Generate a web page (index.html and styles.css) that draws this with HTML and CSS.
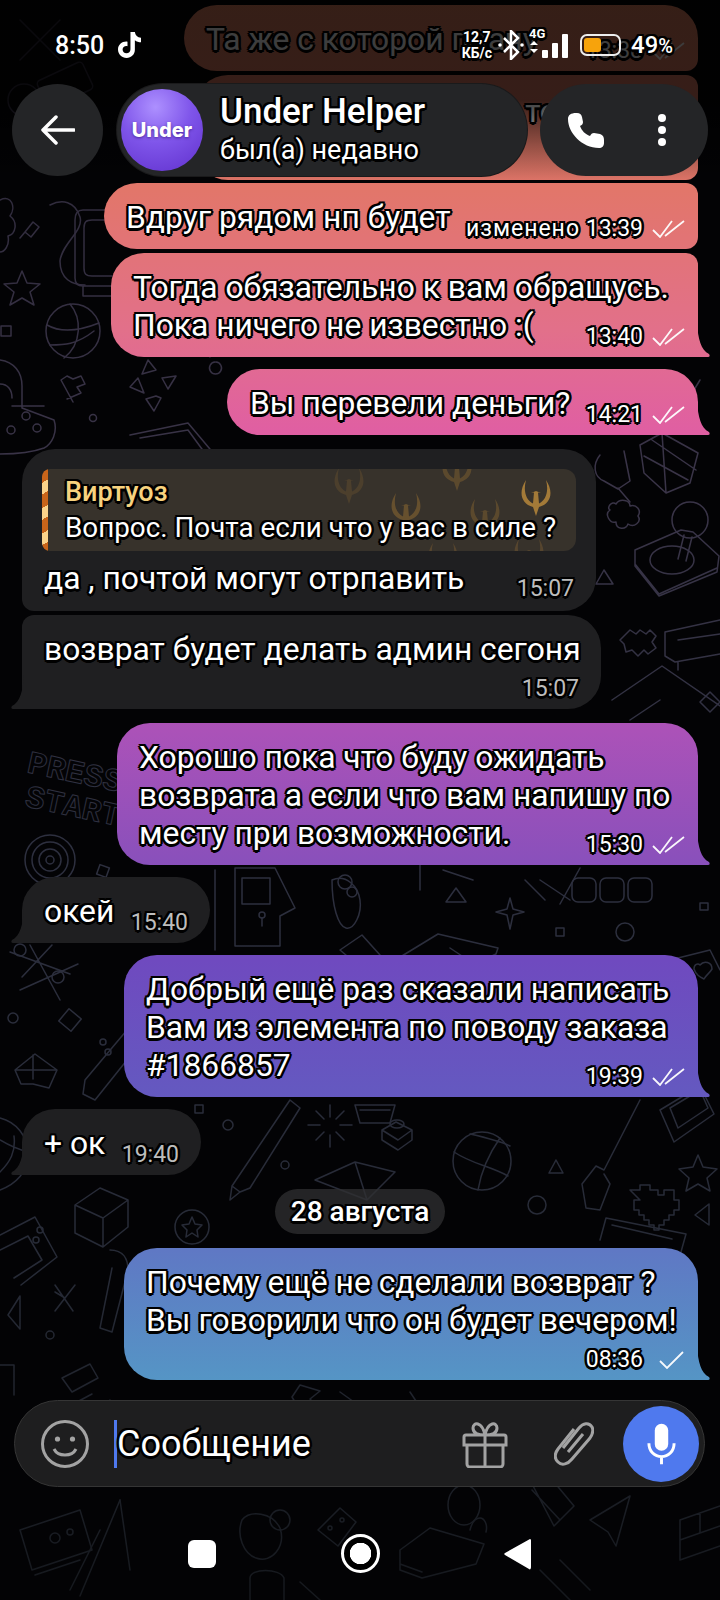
FILE: index.html
```html
<!DOCTYPE html>
<html lang="ru">
<head>
    <meta charset="UTF-8">
    <meta name="viewport" content="width=device-width, initial-scale=1.0">
    <title>Under Helper</title>
    <link rel="stylesheet" href="styles.css">
</head>
<body>
<div class="page">
    <!-- обои с дудлами -->
    <svg class="doodles" viewBox="0 0 720 1600" aria-hidden="true">
        <defs>
            <linearGradient id="doodle-ink" gradientUnits="userSpaceOnUse" x1="0" y1="0" x2="0" y2="1600">
                <stop offset="0" stop-color="#2a2636"/>
                <stop offset="0.3" stop-color="#3a3448"/>
                <stop offset="0.5" stop-color="#2e3040"/>
                <stop offset="0.8" stop-color="#262a36"/>
                <stop offset="1" stop-color="#15181d"/>
            </linearGradient>
        </defs>
        <g fill="none" stroke="url(#doodle-ink)" stroke-width="1.5" stroke-linejoin="round" stroke-linecap="round">
            <!-- верх -->
            <path d="M20 20l40 40M60 20l-40 40"/>
            <rect x="40" y="70" width="50" height="30" rx="4" transform="rotate(-25 65 85)"/>
            <circle cx="24" cy="100" r="16"/>
            <path d="M0 200c12-6 16 8 10 16 8 6 6 18-2 20 2 10-4 16-8 16"/>
            <path d="M25 232l8-10 6 5-8 10zM25 232l-5 6M50 205c12-6 25-4 30 12 4 14-18 26-20 44 0 18 12 24 25 24"/>
            <path d="M75 220c0-6 2-10 8-10h30M75 220v58c0 6 4 8 8 8h30M84 228c0-6 2-8 8-8h20M84 228v40c0 6 2 8 8 8h20M83 286v10h30"/>
            <path d="M22 271l5 12 13 1-10 8 4 13-12-7-12 7 4-13-10-8 13-1z"/>
            <circle cx="73" cy="331" r="27"/>
            <path d="M70 304c12 14 12 40-6 54M47 325c14 8 32 6 52-2M50 345c14 0 26 0 44-14"/>
            <rect x="1" y="326" width="10" height="10"/>
            <path d="M0 360c14 2 22 12 22 26v22l32 12c4 12-2 24-10 28-16 6-34 6-44 6M0 384c8 0 12 6 12 14M12 406l32 0"/>
            <circle cx="26" cy="416" r="4"/><circle cx="11" cy="430" r="4"/><circle cx="37" cy="428" r="4"/>
            <path d="M73 402l-12-22 6-4 6 3 8-3 4 8-8 3 4 6-14 6"/>
            <circle cx="93" cy="418" r="3.5"/>
            <path d="M148 360l8 10-14 4zM162 378l14-2-8 13zM138 378l-8 9 14 6zM156 396l-10 3 8 12 7-13z"/>
            <path d="M130 435l58-12 32 38M140 438l48-8 22 30"/>
            <path d="M200 345l10 12M215 362a6 6 0 1 0 1 0"/>
            <!-- право: y 450-720 -->
            <path d="M640 445l22-12 36 20-8 30-24 10-22-20z M662 433l4 60M644 456l44 24M652 440l44 30"/>
            <path d="M600 455c-8 10-6 22 4 26l14 8 12-8-6-30M618 488l12 14"/>
            <circle cx="690" cy="520" r="18"/><path d="M684 535l-6 24M692 537l-6 24"/>
            <path d="M635 550l46-20 12 2 26 24-2 16-58 24-24-30zM635 550v14l24 30 58-26"/>
            <ellipse cx="672" cy="560" rx="22" ry="14"/>
            <path d="M604 570l-8 14h17z"/>
            <path d="M616 504c4-6 14-4 14 2 6-2 12 4 8 10 4 6-4 12-10 8-2 6-12 6-12-2-6 2-12-8-6-12-4-2 2-10 6-6z"/>
            <path d="M630 630l6 4 4-4 6 4 4-4 6 6-4 6 4 6-8 6-4-4-6 6-6-6-6 2-2-8-4-4 6-6z"/>
            <path d="M665 632l55-12M665 632v24l10 6 45-8M678 640l42-6M678 662v8"/>
            <path d="M612 700l50-34 58 40M630 720l30-20"/>
            <path d="M700 702l10-10 10 10-10 10z"/>
            <path d="M598 380l24 32M640 390l40 8M700 380l-18 30"/>
            <!-- слева: PRESS START и мишень -->
            <text x="26" y="772" class="doodle-label" transform="rotate(12 26 772)">PRESS</text>
            <text x="24" y="806" class="doodle-label" transform="rotate(12 24 806)">START</text>
            <circle cx="50" cy="860" r="25"/><circle cx="50" cy="860" r="18"/><circle cx="50" cy="860" r="11"/><circle cx="50" cy="860" r="4"/>
            <rect x="98" y="866" width="10" height="10" transform="rotate(20 103 871)"/>
            <path d="M30 945l30 55M52 945l-30 32M10 952l60 22M20 990l58-26"/>
            <circle cx="20" cy="950" r="6"/><circle cx="58" cy="977" r="6"/>
            <path d="M215 870v80M235 868h40l20 40-15 8v30h-45z M242 878h28v26h-28z"/>
            <circle cx="262" cy="915" r="3"/><path d="M262 918v8"/>
            <path d="M332 880c14-6 26 6 28 20 2 14-6 30-14 28-8-2-14-22-14-48z"/>
            <circle cx="345" cy="882" r="7"/><circle cx="352" cy="892" r="5"/>
            <path d="M340 950l22-15 18 20-20 12z"/>
            <path d="M15 1070l20-16 22 16-8 18-16-4-12 0z M33 1055l0 24M16 1070l40 0"/>
            <path d="M85 1080l42-50 10 6-2 14-40 50-12-6z"/>
            <circle cx="103" cy="1042" r="3"/><circle cx="108" cy="1052" r="3"/>
            <rect x="62" y="1012" width="16" height="16" transform="rotate(40 70 1020)"/>
            <circle cx="13" cy="1018" r="5"/>
            <!-- середина -->
            <path d="M443 870l30 10M420 860v30"/>
            <path d="M580 868l-20 36M540 880l30 20M525 880l20 20"/>
            <rect x="572" y="878" width="24" height="24" rx="6"/><rect x="600" y="878" width="24" height="24" rx="6"/><rect x="628" y="878" width="24" height="24" rx="6"/>
            <path d="M456 888l-10 14h20z"/>
            <path d="M510 898l3 11 11 3-11 3-3 14-3-14-11-3 11-3z"/>
            <path d="M392 962l46-28 60 14-2 6-58 28zM450 948l18 12"/>
            <rect x="556" y="928" width="8" height="8"/>
            <circle cx="625" cy="932" r="9"/>
            <rect x="700" y="903" width="8" height="7"/>
            <path d="M670 960l40-10 10 20M670 960l6 36M700 965c4-5 12-3 12 4-3 5-6 6-8 10-4-2-8-4-10-10 0-5 4-6 6-4z"/>
            <path d="M355 1105h40l-5 18h-30zM360 1110h30"/>
            <path d="M382 1130l14-8 16 8-14 10zM382 1130v10l16 10 14-10v-10"/>
            <ellipse cx="397" cy="1124" rx="7" ry="4"/>
            <circle cx="482" cy="1161" r="29"/>
            <path d="M454 1152c18 12 36 14 54 24M500 1138c-14 20-20 40-22 52M470 1134c18 4 32 8 40 12"/>
            <path d="M556 1160l-7 13h14z"/>
            <path d="M640 1100l-36 70M604 1170l-8-4-14 18 4 24 14 2 10-26-6-10"/>
            <path d="M698 1155l5 12 14 2-10 9 3 13-12-7-12 7 3-13-10-9 14-2z"/>
            <path d="M660 1110l40-24 14 28-40 28zM670 1108l30-18 8 18-30 20z"/>
            <path d="M630 1190h10v-5h10v5h8v5h6v-5h10v10h5v10h-5v5h-5v5h-5v5h-5v5h-5v-5h-5v-5h-5v-5h-5v-5h-5v-10h6z"/>
            <path d="M0 1118c16 4 28 18 28 36s-12 30-28 36M0 1140c10 6 20 10 28 12M0 1172c10-10 16-20 14-36"/>
            <path d="M290 1100l-58 86 8 6 10-4 50-80zM232 1186l-2 14 10-8"/>
            <rect x="195" y="1105" width="8" height="8"/>
            <circle cx="228" cy="1125" r="5"/>
            <path d="M330 1105v12M330 1135v12M308 1125h12M340 1125h12M316 1111l8 8M344 1111l-8 8M316 1140l8-8M344 1140l-8-8"/>
            <path d="M315 1180l40-18 40 10-28 28zM355 1162l12 38"/>
            <circle cx="285" cy="1165" r="4"/>
            <!-- y 1180-1380 -->
            <path d="M75 1205l25-17 28 12-25 18zM75 1205v28l28 14 25-20v-27M103 1218v29"/>
            <path d="M0 1235l35-18 22 40-36 28M0 1250l28-14 14 24-28 18"/>
            <circle cx="40" cy="1230" r="3"/><circle cx="36" cy="1240" r="3"/>
            <circle cx="192" cy="1227" r="17"/><path d="M192 1217l3 7 7 1-5 5 1 7-6-4-6 4 1-7-5-5 7-1z"/>
            <circle cx="537" cy="1205" r="9"/>
            <path d="M695 1215l14-11v21z"/>
            <path d="M600 1240l6-22 80 16-14 50M612 1225l60 14"/>
            <path d="M110 1250c14 0 18 10 18 20l-16 62-12-4 12-60"/>
            <path d="M55 1285l18 26M75 1285l-20 26M65 1298l-10-6"/>
            <path d="M20 1296l-12 19 12 14z"/>
            <circle cx="50" cy="1335" r="4"/>
            <path d="M0 1365h14v30M62 1410l30-16M62 1378l28-14 8 14-26 14z"/>
            <!-- под полем ввода -->
            <path d="M300 1385l-8 12 6 10M300 1385l20 6-10 8 6 6"/>
            <path d="M110 1400l-10 14M340 1392l14 10M410 1392l8 12"/>
            <path d="M20 1530l60-20 12 40-60 20zM35 1575l45-15"/>
            <circle cx="55" cy="1538" r="5"/><circle cx="70" cy="1532" r="3"/>
            <path d="M70 1590l30-60M120 1500l-40 96"/>
            <path d="M242 1520c8-10 30-8 38 8 6 18-8 36-24 30-12-4-20-22-14-38z"/>
            <circle cx="280" cy="1520" r="10"/>
            <path d="M318 1530l22-22 16 14-18 24z"/>
            <circle cx="330" cy="1528" r="2"/><circle cx="342" cy="1520" r="2"/>
            <path d="M400 1550l30-22 54 16-8 20-54 14-22-8zM400 1550l0 14 22 8"/>
            <path d="M470 1530c2-8 6-12 10-12s8 6 6 14"/>
            <ellipse cx="464" cy="1505" rx="16" ry="20"/>
            <path d="M530 1480l14-10 30 36-20 20zM532 1490l28 30"/>
            <path d="M590 1520l40-24-14 50-8-14z"/>
            <path d="M680 1520l40-14M680 1540l40-14M680 1560l40-14M680 1520v40M700 1513v20"/>
            <path d="M250 1600v-22c0-10 30-10 34 0v22M320 1600l-20-18M540 1570l30 30M560 1560l30 30"/>
            <path d="M120 1500l10 70"/>
        </g>
    </svg>

    <div class="messages">
        <div class="bubble out bubble-top1 joined-down">
            <p class="msg-text">Та же с которой плачу</p>
            <span class="meta">
                <span class="time">13:38</span>
                <svg class="checks" viewBox="0 0 33 18"><path d="M1 10l7 7L20 1M13 16L32 1"/></svg>
            </span>
        </div>
        <div class="bubble out bubble-top2 joined-up joined-down">
            <p class="msg-text">Просто уточню что то</p>
        </div>
        <div class="bubble out bubble-edited joined-up joined-down">
            <p class="msg-text">Вдруг рядом нп будет</p>
            <span class="meta">
                <span class="time"><span class="edited">изменено</span> 13:39</span>
                <svg class="checks" viewBox="0 0 33 18"><path d="M1 10l7 7L20 1M13 16L32 1"/></svg>
            </span>
        </div>
        <div class="bubble out tailed bubble-then joined-up">
            <p class="msg-text">Тогда обязательно к вам обращусь.<br>Пока ничего не известно :(</p>
            <span class="meta">
                <span class="time">13:40</span>
                <svg class="checks" viewBox="0 0 33 18"><path d="M1 10l7 7L20 1M13 16L32 1"/></svg>
            </span>
        </div>
        <div class="bubble out tailed bubble-money gap-md">
            <p class="msg-text">Вы перевели деньги?</p>
            <span class="meta">
                <span class="time">14:21</span>
                <svg class="checks" viewBox="0 0 33 18"><path d="M1 10l7 7L20 1M13 16L32 1"/></svg>
            </span>
        </div>

        <div class="bubble in bubble-reply gap-lg joined-down-left">
            <div class="reply">
                <svg class="reply-logos" viewBox="0 0 534 82" aria-hidden="true">
                    <defs>
                        <path id="quake" d="M7 0C-1 12 2 24 14 27l3 9 3-9C32 24 35 12 27 0c3 11 0 20-7 23.500l-1-11 3 .5-5-2-5 2 3-.5-1 11C7 20 4 11 7 0z"/>
                    </defs>
                    <use href="#quake" x="290" y="-1" fill="#6b5230" opacity=".4"/>
                    <use href="#quake" x="347" y="24" fill="#7a5c30" opacity=".7"/>
                    <use href="#quake" x="398" y="-14" fill="#7a5c30" opacity=".55"/>
                    <use href="#quake" x="426" y="30" fill="#7a5c30" opacity=".55"/>
                    <use href="#quake" x="477" y="11" fill="#a37a38"/>
                    <use href="#quake" x="384" y="74" fill="#6b5230" opacity=".6"/>
                    <use href="#quake" x="470" y="70" fill="#6b5230" opacity=".6"/>
                </svg>
                <span class="reply-name">Виртуоз</span>
                <span class="reply-text">Вопрос. Почта если что у вас в силе ?</span>
            </div>
            <p class="msg-text">да , почтой могут отрпавить</p>
            <span class="meta meta-in meta-reply"><span class="time">15:07</span></span>
        </div>
        <div class="bubble in tailed bubble-admin joined-up-left">
            <p class="msg-text">возврат будет делать админ сегоня</p>
            <span class="meta meta-in"><span class="time">15:07</span></span>
        </div>

        <div class="bubble out tailed bubble-wait gap-lg">
            <p class="msg-text">Хорошо пока что буду ожидать<br>возврата а если что вам напишу по<br>месту при возможности.</p>
            <span class="meta">
                <span class="time">15:30</span>
                <svg class="checks" viewBox="0 0 33 18"><path d="M1 10l7 7L20 1M13 16L32 1"/></svg>
            </span>
        </div>
        <div class="bubble in tailed bubble-okay gap-md">
            <p class="msg-text">окей</p>
            <span class="meta meta-in"><span class="time">15:40</span></span>
        </div>
        <div class="bubble out tailed bubble-order gap-md">
            <p class="msg-text">Добрый ещё раз сказали написать<br>Вам из элемента по поводу заказа<br>#1866857</p>
            <span class="meta">
                <span class="time">19:39</span>
                <svg class="checks" viewBox="0 0 33 18"><path d="M1 10l7 7L20 1M13 16L32 1"/></svg>
            </span>
        </div>
        <div class="bubble in tailed bubble-plus gap-md">
            <p class="msg-text">+ ок</p>
            <span class="meta meta-in"><span class="time">19:40</span></span>
        </div>

        <div class="date-pill">28 августа</div>

        <div class="bubble out tailed bubble-why">
            <p class="msg-text">Почему ещё не сделали возврат ?<br>Вы говорили что он будет вечером!</p>
            <span class="meta">
                <span class="time">08:36</span>
                <svg class="checks check-single" viewBox="0 0 33 18"><path d="M8 10l7 7L31 1"/></svg>
            </span>
        </div>
    </div>

    <!-- поле ввода -->
    <div class="composer">
        <svg class="composer-icon icon-smile" viewBox="0 0 48 48">
            <circle cx="24" cy="24" r="22.5"/>
            <circle class="solid" cx="16.5" cy="19" r="2.6"/>
            <circle class="solid" cx="31.5" cy="19" r="2.6"/>
            <path d="M13 29c4 8 18 8 22 0"/>
        </svg>
        <div class="composer-field">Сообщение</div>
        <svg class="composer-icon icon-gift" viewBox="0 0 46 48">
            <path d="M2 17a2 2 0 0 1 2-2h38a2 2 0 0 1 2 2v8H2zM5 25v19a3 3 0 0 0 3 3h30a3 3 0 0 0 3-3V25M23 15v32M23 15c-8 0-12-2-12-7 0-6 9-7 12 7zM23 15c8 0 12-2 12-7 0-6-9-7-12 7z"/>
        </svg>
        <svg class="composer-icon icon-clip" viewBox="0 0 40 46">
            <path d="M9 27L25 7c4-5 10-6 13-1 2 4 0 8-2 11L18 38c-4 5-10 7-14 3-4-4-3-9 0-13L20 8M14 31l15-18"/>
        </svg>
        <button class="mic-btn" type="button" aria-label="Микрофон">
            <svg viewBox="0 0 34 50" class="mic-icon">
                <rect x="9" y="1" width="16" height="32" rx="8"/>
                <path class="mic-arc" d="M2 24c0 10 7 16 15 16s15-6 15-16M17 40v9"/>
            </svg>
        </button>
    </div>

    <!-- кнопки андроида -->
    <div class="nav-bar">
        <span class="nav-square"></span>
        <span class="nav-home"></span>
        <svg class="nav-back" viewBox="0 0 27 32"><path d="M26 1c1 0 1 1 1 2v26c0 2-1 3-2 2L1 17c-1-1-1-1 0-2z"/></svg>
    </div>

    <!-- поверх сообщений: статус бар и шапка -->
    <div class="top-chrome">
        <div class="status-bar">
            <span class="status-time">8:50</span>
            <svg class="tiktok" viewBox="0 0 24 27"><path d="M13 0h4.600c.4 3.400 2.700 5.600 6.400 6v4.600c-2.400 0-4.500-.7-6.400-2.100v10c0 5-3.800 8.500-8.600 8.500C4 27 0 23.200 0 18.300c0-5.200 4.500-9 9.900-8.300v4.800c-2.800-.6-5.100 1-5.100 3.500 0 2.200 1.700 3.900 4 3.900 2.400 0 4.200-1.700 4.200-4.300z"/></svg>
            <div class="status-right">
                <span class="net-speed">12,7<br>КБ/с</span>
                <svg class="bt" viewBox="0 0 26 30"><path d="M6 8l14 14-7 7V1l7 7L6 22"/><circle class="solid" cx="2" cy="15" r="1.800"/><circle class="solid" cx="24" cy="15" r="1.800"/></svg>
                <div class="cell">
                    <span class="cell-label">4G</span>
                    <svg class="cell-bars" viewBox="0 0 40 24">
                        <path d="M1 11l4-4 4 4zM1 15h8l-4 4z"/>
                        <rect x="13" y="16" width="6" height="8" rx="1"/>
                        <rect x="23" y="9" width="6" height="15" rx="1"/>
                        <rect x="33" y="0" width="6" height="24" rx="1"/>
                    </svg>
                </div>
                <div class="battery"><span class="battery-fill"></span></div>
                <span class="battery-pct">49<small>%</small></span>
            </div>
        </div>
        <div class="header">
            <button class="round-btn" type="button" aria-label="Назад">
                <svg viewBox="0 0 34 30" class="back-arrow"><path d="M33 15H2M15 2L2 15l13 13"/></svg>
            </button>
            <div class="peer">
                <div class="avatar">Under</div>
                <div class="peer-info">
                    <div class="peer-name">Under Helper</div>
                    <div class="peer-status">был(а) недавно</div>
                </div>
            </div>
            <div class="actions">
                <svg class="call-icon" viewBox="0 0 36 36"><path d="M9 1c3 0 4 1 5 4l1 5c0 2-1 3-3 4 2 5 5 8 10 10 1-2 2-3 4-3l6 1c3 1 4 3 4 6v3c0 3-2 5-5 5C14 36 0 21 0 7c0-4 3-6 8-6z"/></svg>
                <div class="dots"><span></span><span></span><span></span></div>
            </div>
        </div>
    </div>
</div>
</body>
</html>
```

FILE: styles.css
```css
html, body {
    margin: 0;
    padding: 0;
    background: #030305;
}
body {
    font-family: Roboto, "Noto Sans", sans-serif;
    color: #fff;
    --outline: 2.500px 0 0 #000, -2.500px 0 0 #000, 0 2.500px 0 #000, 0 -2.500px 0 #000, 1.800px 1.800px 0 #000, -1.800px 1.800px 0 #000, 1.800px -1.800px 0 #000, -1.800px -1.800px 0 #000;
}
.page {
    position: relative;
    width: 720px;
    height: 1600px;
    overflow: hidden;
    display: flex;
    flex-direction: column;
}
.doodles {
    position: absolute;
    top: 0;
    left: 0;
    width: 720px;
    height: 1600px;
}
.doodle-label {
    font-family: "Liberation Mono", monospace;
    font-size: 32px;
    font-weight: 700;
    stroke-width: 1;
}

/* сообщения */
.messages {
    position: relative;
    display: flex;
    flex-direction: column;
    gap: 4px;
    padding: 5px 22px 0;
}
.bubble {
    position: relative;
    box-sizing: border-box;
    padding: 15px 22px 13px;
    border-radius: 33px;
}
.msg-text {
    margin: 0;
    font-size: 31.800px;
    line-height: 38px;
    text-shadow: var(--outline);
    white-space: nowrap;
}
.out {
    align-self: flex-end;
    background: linear-gradient(180deg, #df7f5e 0, #e2766a 190px, #e2708a 330px, #e05fa2 430px, #ab52b8 730px, #8a50bb 860px, #6f4abf 960px, #6459c0 1097px, #5f78c4 1250px, #5595c5 1380px, #5095c8 1600px) fixed;
}
.in {
    align-self: flex-start;
    background: #1f1f21;
}
.gap-md { margin-top: 8px; }
.gap-lg { margin-top: 10px; }
.joined-down { border-bottom-right-radius: 12px; }
.joined-up { border-top-right-radius: 12px; }
.joined-down-left { border-bottom-left-radius: 12px; }
.joined-up-left { border-top-left-radius: 12px; }

/* хвостик */
.tailed { border-bottom-right-radius: 0; }
.in.tailed {
    border-bottom-right-radius: 33px;
    border-bottom-left-radius: 0;
}
.tailed::after {
    content: "";
    position: absolute;
    bottom: 0;
    right: -12px;
    width: 13px;
    height: 34px;
    background: inherit;
    clip-path: path('M0 0C1 16 4 27 12 31C13 32 13 34 11 34L0 34Z');
}
.in.tailed::after {
    right: auto;
    left: -11px;
    transform: scaleX(-1);
}

.bubble-top1 { width: 514px; height: 66px; }
.bubble-top2 { width: 503px; height: 105px; text-align: right; margin-bottom: -1px; padding: 17px 140px 0 22px; }
.bubble-edited { width: 594px; height: 66px; }
.bubble-then { width: 587px; }
.bubble-money { width: 471px; height: 66px; padding-left: 23px; }
.bubble-reply { width: 574px; height: 162px; padding: 20px 20px 0; }
.bubble-reply .msg-text { padding: 8px 0 0 2px; }
.bubble-admin { width: 579px; height: 94px; }
.bubble-wait { width: 581px; }
.bubble-okay { width: 188px; height: 66px; }
.bubble-order { width: 574px; }
.bubble-plus { width: 179px; height: 66px; }
.bubble-why { width: 574px; height: 132px; }

.meta {
    position: absolute;
    right: 13px;
    bottom: 6px;
    display: flex;
    align-items: center;
    gap: 9px;
    font-size: 23px;
    line-height: 28px;
    text-shadow: var(--outline);
    white-space: nowrap;
}
.meta-in {
    right: 22px;
    color: #bdbdbd;
}
.meta-reply {
    bottom: 8px;
}
.edited {
    letter-spacing: 1px;
}
.checks {
    width: 33px;
    height: 18px;
    fill: none;
    stroke: #fff;
    stroke-width: 1.800;
    opacity: .95;
}

/* цитата */
.reply {
    position: relative;
    box-sizing: border-box;
    height: 82px;
    padding: 5px 0 0 23px;
    background: #37322b;
    border-radius: 8px 12px 12px 8px;
    overflow: hidden;
}
.reply::before {
    content: "";
    position: absolute;
    top: 0;
    bottom: 0;
    left: 0;
    width: 6px;
    background: repeating-linear-gradient(150deg, #c8641a 0 12px, #fbd38a 12px 22px);
    border-radius: 6px 0 0 6px;
}
.reply-logos {
    position: absolute;
    top: 0;
    left: 0;
    width: 534px;
    height: 82px;
}
.reply-name, .reply-text {
    position: relative;
    display: block;
    text-shadow: var(--outline);
    white-space: nowrap;
}
.reply-name {
    color: #f7d27e;
    font-size: 27px;
    font-weight: 500;
    line-height: 36px;
}
.reply-text {
    font-size: 27.800px;
    line-height: 36px;
}

.date-pill {
    align-self: center;
    margin: 10px 0 10px;
    padding: 0 16px;
    height: 45px;
    line-height: 45px;
    border-radius: 23px;
    background: rgba(48, 48, 50, .75);
    font-size: 28px;
    font-weight: 500;
    text-shadow: var(--outline);
}

/* поле ввода */
.composer {
    position: relative;
    box-sizing: border-box;
    display: flex;
    align-items: center;
    width: 691px;
    height: 87px;
    margin: 20px 0 0 14px;
    padding: 0 5px 0 26px;
    background: #1e1e1f;
    border: 1px solid #353535;
    border-radius: 44px;
}
.composer-icon {
    fill: none;
    stroke: #a3a3a3;
    stroke-width: 3;
    flex: none;
}
.composer-icon .solid {
    fill: #a3a3a3;
    stroke: none;
}
.icon-smile { width: 48px; height: 48px; }
.composer-field {
    flex: 1;
    margin-left: 25px;
    height: 48px;
    line-height: 48px;
    border-left: 3px solid #4f79ee;
    font-size: 36px;
    text-shadow: var(--outline);
}
.icon-gift { width: 46px; height: 48px; }
.icon-clip { width: 40px; height: 46px; margin-left: 46px; }
.mic-btn {
    display: flex;
    align-items: center;
    justify-content: center;
    width: 76px;
    height: 76px;
    margin-left: 29px;
    padding: 0;
    border: none;
    border-radius: 50%;
    background: #4f79ee;
}
.mic-icon {
    width: 29px;
    height: 42px;
    fill: #fff;
}
.mic-arc {
    fill: none;
    stroke: #fff;
    stroke-width: 3.500;
}

/* нав бар */
.nav-bar {
    display: flex;
    align-items: center;
    gap: 125px;
    margin-top: 47px;
    padding-left: 188px;
}
.nav-square {
    width: 28px;
    height: 28px;
    background: #fff;
    border-radius: 6px;
}
.nav-home {
    box-sizing: border-box;
    width: 39px;
    height: 39px;
    border: 3px solid #fff;
    border-radius: 50%;
    background: radial-gradient(circle, #fff 0 10.500px, #000 11px);
}
.nav-back {
    width: 27px;
    height: 32px;
    margin-left: -1px;
    fill: #fff;
}

/* статус бар и шапка */
.top-chrome {
    position: absolute;
    top: 0;
    left: 0;
    width: 720px;
    height: 183px;
    background: linear-gradient(180deg, rgba(0, 0, 0, .76) 0, rgba(0, 0, 0, .76) 100px, rgba(0, 0, 0, 0) 183px);
}
.status-bar {
    display: flex;
    align-items: center;
    height: 90px;
    box-sizing: border-box;
    padding: 0 47px 0 55px;
    margin-bottom: -6px;
    text-shadow: var(--outline);
}
.status-time {
    font-size: 25px;
    font-weight: 500;
}
.tiktok {
    width: 23px;
    height: 26px;
    margin-left: 14px;
    fill: #fff;
}
.status-right {
    display: flex;
    align-items: center;
    margin-left: auto;
}
.net-speed {
    font-size: 14px;
    font-weight: 700;
    line-height: 16px;
    text-align: center;
    white-space: nowrap;
}
.bt {
    width: 26px;
    height: 30px;
    margin-left: 6px;
    fill: none;
    stroke: #fff;
    stroke-width: 2.500;
}
.bt .solid {
    fill: #fff;
    stroke: none;
}
.cell {
    position: relative;
    width: 40px;
    height: 26px;
    margin-left: 5px;
}
.cell-label {
    position: absolute;
    top: -5px;
    left: 0;
    font-size: 13px;
    font-weight: 700;
    line-height: 14px;
}
.cell-bars {
    position: absolute;
    top: 2px;
    left: 0;
    width: 40px;
    height: 24px;
    fill: #fff;
}
.battery {
    box-sizing: border-box;
    width: 41px;
    height: 22px;
    margin-left: 11px;
    padding: 2px;
    border: 2px solid #eee;
    border-radius: 7px;
}
.battery-fill {
    display: block;
    width: 17px;
    height: 14px;
    background: #f7a30c;
    border-radius: 3px;
}
.battery-pct {
    margin-left: 10px;
    font-size: 24px;
    font-weight: 500;
}
.battery-pct small {
    font-size: 20px;
}
.header {
    display: flex;
    align-items: center;
    height: 92px;
    padding: 0 12px;
}
.round-btn {
    display: flex;
    align-items: center;
    justify-content: center;
    width: 91px;
    height: 92px;
    padding: 0;
    border: none;
    border-radius: 50%;
    background: #242527;
}
.back-arrow {
    width: 34px;
    height: 30px;
    fill: none;
    stroke: #fff;
    stroke-width: 3.500;
    stroke-linecap: round;
    stroke-linejoin: round;
}
.peer {
    display: flex;
    align-items: center;
    box-sizing: border-box;
    width: 410px;
    height: 92px;
    margin-left: 14px;
    padding-left: 4px;
    background: #242527;
    border-radius: 46px;
    box-shadow: 0 0 0 1px #1a1a1b;
}
.avatar {
    flex: none;
    width: 82px;
    height: 82px;
    border-radius: 50%;
    background: radial-gradient(circle at 42% 22%, #ad90ff 0, #7f55ea 45%, #6030cc 100%);
    font-family: Inter, sans-serif;
    font-size: 20px;
    font-weight: 800;
    line-height: 82px;
    text-align: center;
    text-shadow: 0 1px 3px rgba(50, 20, 120, .7);
}
.peer-info {
    margin-left: 17px;
    text-shadow: var(--outline);
}
.peer-name {
    font-size: 35px;
    font-weight: 500;
    line-height: 40px;
}
.peer-status {
    font-size: 27px;
    line-height: 36px;
}
.actions {
    display: flex;
    align-items: center;
    box-sizing: border-box;
    width: 168px;
    height: 92px;
    margin-left: 13px;
    padding-left: 28px;
    background: #242527;
    border-radius: 46px;
}
.call-icon {
    width: 36px;
    height: 36px;
    fill: #fff;
}
.dots {
    display: flex;
    flex-direction: column;
    gap: 4px;
    margin-left: 54px;
}
.dots span {
    width: 8px;
    height: 8px;
    border-radius: 50%;
    background: #fff;
}
```
